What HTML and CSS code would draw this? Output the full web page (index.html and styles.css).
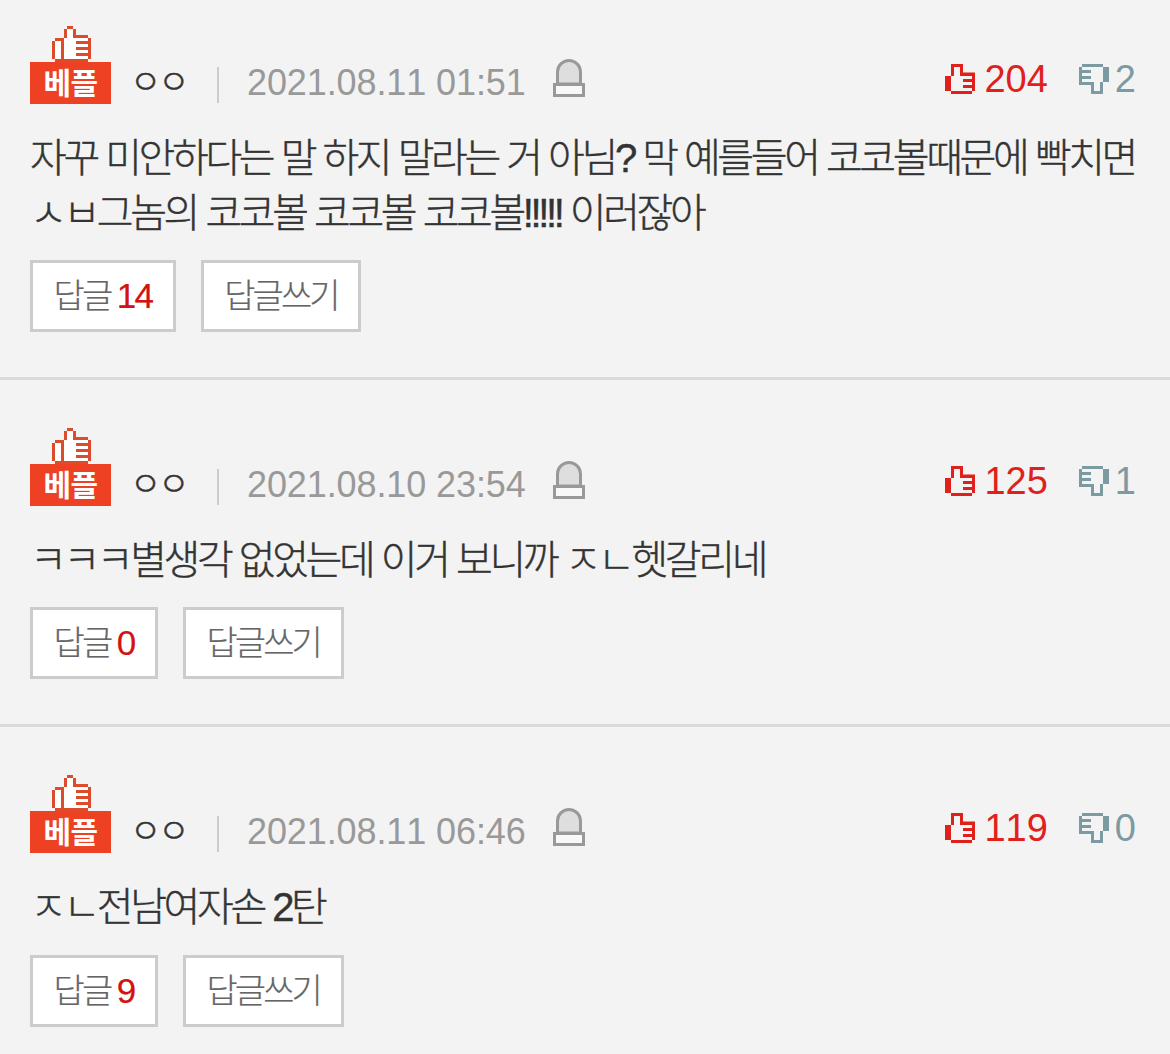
FILE: index.html
```html
<!DOCTYPE html>
<html lang="ko">
<head>
  <meta charset="UTF-8">
  <meta name="viewport" content="width=device-width, initial-scale=1.0">
  <title>베플</title>
  <link rel="stylesheet" href="styles.css">
</head>
<body>
  <!-- shared icons, drawn on a pixel grid -->
  <svg class="icon-defs" width="0" height="0">
    <symbol id="icon-best" viewBox="0 0 13 12">
      <path fill="#fff" d="M5 1h2v3h5v7H1V5h3V1z"/>
      <path d="M5 0h2v1H5zM4 1h1v3H4zM7 1h1v2H7zM7 3h5v1H7zM1 4h3v1H1zM0 5h1v6H0zM3 5h1v6H3zM12 4h1v7h-1zM8 5h4v1H8zM8 7h4v1H8zM8 9h4v1H8zM1 11h11v1H1z"/>
    </symbol>
    <symbol id="icon-up" viewBox="0 0 30 30">
      <path d="M6 0h12v3H6zM6 3h3v9H6zM15 3h3v9h-3zM18 8.500h12V12H18zM27 12h3v15h-3zM18 15h9v3h-9zM18 21h9v3h-9zM0 12h6v15H0zM6 27h21v3H6z"/>
    </symbol>
    <symbol id="icon-down" viewBox="0 0 30 30">
      <path d="M3 0h21v3H3zM0 3h3v18H0zM3 6h9v3H3zM3 12h9v3H3zM3 18h12v3H3zM24 3h6v15h-6zM12 18h3v12h-3zM21 18h3v12h-3zM15 27h6v3h-6z"/>
    </symbol>
    <symbol id="icon-siren" viewBox="0 0 32 38">
      <path fill="#dedede" stroke="#999" stroke-width="3" d="M4.500 25V13a11.500 11.500 0 0 1 23 0V25z"/>
      <path fill="#f8f8f8" stroke="#999" stroke-width="3" d="M1.500 25.500h29v11h-29z"/>
    </symbol>
  </svg>

  <ul class="comment-list">
    <li class="comment">
      <div class="info">
        <div class="best"><svg class="best-icon"><use href="#icon-best"/></svg><span class="best-label">베플</span></div>
        <span class="name">ㅇㅇ</span>
        <span class="date">2021.08.11 01:51</span>
        <svg class="siren"><use href="#icon-siren"/></svg>
        <div class="votes">
          <span class="vote up"><svg class="vote-icon"><use href="#icon-up"/></svg>204</span>
          <span class="vote down"><svg class="vote-icon"><use href="#icon-down"/></svg>2</span>
        </div>
      </div>
      <p class="text">자꾸 미안하다는 말 하지 말라는 거 아님? 막 예를들어 코코볼때문에 빡치면<br>ㅅㅂ그놈의 코코볼 코코볼 코코볼!!!!! 이러잖아</p>
      <div class="buttons">
        <button class="btn">답글 <span class="count">14</span></button>
        <button class="btn">답글쓰기</button>
      </div>
    </li>
    <li class="comment">
      <div class="info">
        <div class="best"><svg class="best-icon"><use href="#icon-best"/></svg><span class="best-label">베플</span></div>
        <span class="name">ㅇㅇ</span>
        <span class="date">2021.08.10 23:54</span>
        <svg class="siren"><use href="#icon-siren"/></svg>
        <div class="votes">
          <span class="vote up"><svg class="vote-icon"><use href="#icon-up"/></svg>125</span>
          <span class="vote down"><svg class="vote-icon"><use href="#icon-down"/></svg>1</span>
        </div>
      </div>
      <p class="text">ㅋㅋㅋ별생각 없었는데 이거 보니까 ㅈㄴ헷갈리네</p>
      <div class="buttons">
        <button class="btn">답글 <span class="count">0</span></button>
        <button class="btn">답글쓰기</button>
      </div>
    </li>
    <li class="comment">
      <div class="info">
        <div class="best"><svg class="best-icon"><use href="#icon-best"/></svg><span class="best-label">베플</span></div>
        <span class="name">ㅇㅇ</span>
        <span class="date">2021.08.11 06:46</span>
        <svg class="siren"><use href="#icon-siren"/></svg>
        <div class="votes">
          <span class="vote up"><svg class="vote-icon"><use href="#icon-up"/></svg>119</span>
          <span class="vote down"><svg class="vote-icon"><use href="#icon-down"/></svg>0</span>
        </div>
      </div>
      <p class="text">ㅈㄴ전남여자손 2탄</p>
      <div class="buttons">
        <button class="btn">답글 <span class="count">9</span></button>
        <button class="btn">답글쓰기</button>
      </div>
    </li>
  </ul>
</body>
</html>
```

FILE: styles.css
```css
* {
  box-sizing: border-box;
  margin: 0;
  padding: 0;
}
body {
  background: #f3f3f3;
  color: #333;
  font-family: "Liberation Sans", "Noto Sans CJK KR", sans-serif;
  font-kerning: none;
  overflow: hidden;
}
.icon-defs {
  display: block;
}
.comment-list {
  list-style: none;
}
.comment {
  padding: 48px 30px 45px;
  border-bottom: 3px solid #dadada;
}
.comment:first-child {
  padding-top: 26px;
}
.comment:last-child {
  border-bottom: none;
  padding-bottom: 27px;
}

.info {
  display: flex;
  align-items: flex-end;
  height: 78px;
}
.best {
  flex: none;
  width: 81px;
  display: flex;
  flex-direction: column;
}
.best-icon {
  width: 39px;
  height: 36px;
  margin-left: 22px;
  fill: #db4b2c;
}
.best-label {
  height: 42px;
  background: #ee4023;
  color: #fff;
  font-size: 30px;
  font-weight: 700;
  line-height: 44px;
  letter-spacing: -0.5px;
  text-align: center;
}
.name {
  flex: none;
  margin-left: 19px;
  width: 68px;
  font-size: 34px;
  font-weight: 300;
  line-height: 44px;
  letter-spacing: -3px;
  white-space: nowrap;
  -webkit-text-stroke: 0.5px #333;
}
.date {
  display: flex;
  flex: none;
  align-items: center;
  height: 42px;
  color: #999;
  font-size: 36px;
  width: 355px;
  letter-spacing: -0.1px;
  white-space: nowrap;
}
.date::before {
  content: "";
  width: 2px;
  height: 36px;
  margin: 4px 28px 0 19px;
  background: #ccc;
}
.siren {
  flex: none;
  width: 32px;
  height: 38px;
  margin-bottom: 7px;
}
.votes {
  display: flex;
  gap: 31px;
  margin-left: auto;
  margin-right: 4px;
}
.vote {
  display: flex;
  align-items: center;
  height: 50px;
  font-size: 38px;
}
.vote-icon {
  width: 30px;
  height: 30px;
  margin-right: 9px;
}
.up {
  color: #e0211b;
  fill: #e0211b;
}
.down {
  color: #7c9aa2;
  fill: #7c9aa2;
}
.down .vote-icon {
  margin-right: 6px;
}

.text {
  margin-top: 27px;
  font-size: 40px;
  font-weight: 300;
  line-height: 55px;
  letter-spacing: -3.4px;
  word-spacing: 0.7px;
  white-space: nowrap;
  -webkit-text-stroke: 0.4px #333;
}

.buttons {
  display: flex;
  gap: 25px;
  margin-top: 19px;
}
.comment:last-child .buttons {
  margin-top: 20px;
}
.btn {
  height: 72px;
  padding: 0 20.5px 6px;
  border: 3px solid #ccc;
  background: #fff;
  color: #666;
  font-family: inherit;
  font-size: 34px;
  font-weight: 300;
  letter-spacing: -2.9px;
  white-space: nowrap;
  -webkit-text-stroke: 0.2px #666;
}
.count {
  color: #d31212;
  font-size: 35px;
  letter-spacing: -1.8px;
  -webkit-text-stroke: 0.2px #d31212;
}
```
